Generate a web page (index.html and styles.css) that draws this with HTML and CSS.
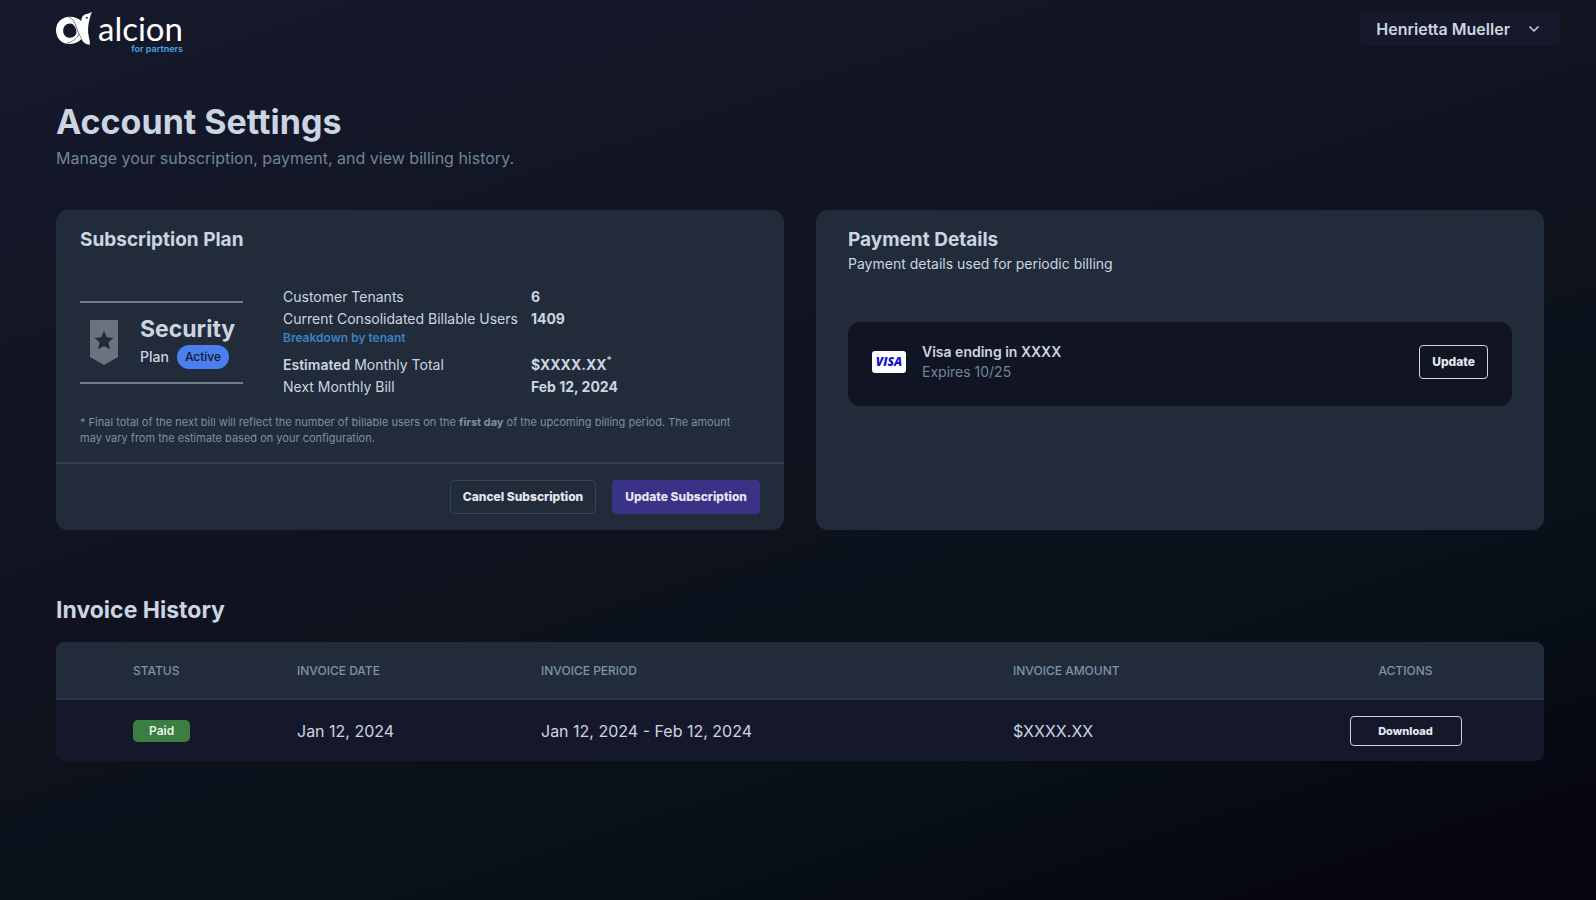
FILE: index.html
```html
<!DOCTYPE html>
<html lang="en">
<head>
<meta charset="utf-8">
<title>Account Settings</title>
<meta name="viewport" content="width=device-width, initial-scale=1">
<link rel="stylesheet" href="styles.css">
</head>
<body>
<header class="topbar">
  <a class="brand" href="#" aria-label="alcion for partners">
    <svg class="brand-mark" viewBox="0 0 36 34" aria-hidden="true">
      <path fill="#fff" fill-rule="evenodd" d="M36 0 31 2c-4 .3-5.500 3.500-5.800 7C22.500 6.500 18.500 4.800 14 4.800 6 4.800 0 10.500 0 18.300S5.500 32 13 32c5 0 9.500-1.800 12.300-5 1.700 3.500 4.500 5.500 8.500 5.800.3-2.300-.3-5-1-8-1.300-5.500-.8-11.500.7-17.300C34 5.500 34.300 3 36 0zM13.800 11.500c3 0 5 2 6.200 5.500.8 2.500.5 4.500-.5 6-1.300 1.800-3.300 2.800-5.700 2.800-3.800 0-6.600-3-6.600-7.100s2.800-7.200 6.600-7.200z"/>
      <path fill="none" stroke="#555a6b" stroke-width=".8" d="M13 5.200c7.500 2.800 7 13.500 12.500 21.500M10.500 31.500c6-1.500 10.500-5 12.300-9.500"/>
      <circle cx="30.800" cy="5.800" r="1" fill="#151829"/>
    </svg>
    <span class="brand-text">
      <span class="brand-name">alcion</span>
      <span class="brand-tag">for partners</span>
    </span>
  </a>
  <button class="user-menu" type="button" aria-haspopup="menu">
    <span>Henrietta Mueller</span>
    <svg class="chevron" viewBox="0 0 12 8" aria-hidden="true"><path d="M1.500 1.500 6 6l4.500-4.500"/></svg>
  </button>
</header>

<main class="page">
  <h1 class="page-title">Account Settings</h1>
  <p class="page-lead">Manage your subscription, payment, and view billing history.</p>

  <div class="cards">
    <section class="card plan-card">
      <div class="plan-body">
        <h2 class="card-title">Subscription Plan</h2>
        <div class="plan-row">
          <div class="plan-box">
            <svg class="plan-icon" viewBox="0 0 28 45" aria-hidden="true">
              <path fill="#6b7280" d="M0 0h28v37l-14 8L0 37z"/>
              <path fill="#222b3a" d="m14 11 2.800 6.300 6.700.7-5 4.600 1.400 6.700L14 25.900l-5.900 3.400 1.400-6.700-5-4.600 6.700-.7z"/>
            </svg>
            <div>
              <div class="plan-name">Security</div>
              <div class="plan-state">Plan <span class="pill">Active</span></div>
            </div>
          </div>
          <dl class="facts">
            <dt>Customer Tenants</dt><dd>6</dd>
            <dt>Current Consolidated Billable Users <a class="breakdown" href="#">Breakdown by tenant</a></dt><dd>1409</dd>
            <dt><b>Estimated</b> Monthly Total</dt><dd>$XXXX.XX<sup>*</sup></dd>
            <dt>Next Monthly Bill</dt><dd>Feb 12, 2024</dd>
          </dl>
        </div>
        <p class="footnote">* Final total of the next bill will reflect the number of billable users on the <b>first day</b> of the upcoming billing period. The amount may vary from the estimate based on your configuration.</p>
      </div>
      <div class="card-actions">
        <button class="btn btn-muted" type="button">Cancel Subscription</button>
        <button class="btn btn-primary" type="button">Update Subscription</button>
      </div>
    </section>

    <section class="card pay-card">
      <h2 class="card-title">Payment Details</h2>
      <p class="card-lead">Payment details used for periodic billing</p>
      <div class="method">
        <span class="visa">VISA</span>
        <div class="method-text">
          <div class="method-name">Visa ending in XXXX</div>
          <div class="method-exp">Expires 10/25</div>
        </div>
        <button class="btn btn-outline" type="button">Update</button>
      </div>
    </section>
  </div>

  <h2 class="section-title">Invoice History</h2>
  <table class="invoices">
    <colgroup><col class="c-gap"><col class="c-status"><col class="c-date"><col class="c-period"><col class="c-amount"><col class="c-actions"></colgroup>
    <thead>
      <tr><th></th><th>STATUS</th><th>INVOICE DATE</th><th>INVOICE PERIOD</th><th>INVOICE AMOUNT</th><th>ACTIONS</th></tr>
    </thead>
    <tbody>
      <tr><td></td><td><span class="paid">Paid</span></td><td>Jan 12, 2024</td><td>Jan 12, 2024 - Feb 12, 2024</td><td>$XXXX.XX</td><td><button class="btn btn-outline btn-download" type="button">Download</button></td></tr>
    </tbody>
  </table>
</main>
</body>
</html>
```
FILE: styles.css
```css
* { box-sizing: border-box; }
body {
  margin: 0;
  min-height: 100vh;
  font-family: Inter, "Liberation Sans", sans-serif;
  font-size: 16px;
  color: #cbd5e1;
  background: linear-gradient(162deg, #15192b 0%, #10131f 45%, #08111a 74%, #060713 92%, #06060f 100%);
}
h1, h2, p, dl, dd { margin: 0; }

.topbar {
  display: flex;
  justify-content: space-between;
  align-items: flex-start;
  padding: 12px 36px 0 56px;
}
.brand { display: flex; gap: 6px; text-decoration: none; color: #fff; }
.brand-mark { width: 36px; height: 34px; }
.brand-text { display: flex; flex-direction: column; align-items: flex-end; }
.brand-name { font: 400 33px/32px Lato, sans-serif; }
.brand-tag { font-size: 9px; line-height: 10px; font-weight: 600; color: #4ba3e3; }
.user-menu {
  display: flex;
  align-items: center;
  gap: 18px;
  height: 34px;
  padding: 0 20px 0 16px;
  border: 0;
  border-radius: 4px;
  background: #15192b;
  color: #cbd5e1;
  font: 600 16px/24px Inter, sans-serif;
}
.chevron { width: 12px; height: 8px; fill: none; stroke: #cbd5e1; stroke-width: 1.5; }

.page { padding: 48px 52px 56px 56px; }
.page-title { font-size: 34px; line-height: 40px; font-weight: 700; }
.page-lead { margin-top: 4px; font-size: 16px; line-height: 24px; color: #708599; }

.cards { display: grid; grid-template-columns: 1fr 1fr; gap: 32px; margin-top: 40px; }
.card { border-radius: 12px; background: #222b3a; }
.card-title { font-size: 19px; line-height: 28px; font-weight: 700; }
.plan-body { padding: 16px 24px; }
.plan-row { display: flex; gap: 40px; margin-top: 33px; }
.plan-box {
  display: flex;
  gap: 22px;
  align-items: center;
  align-self: center;
  width: 163px;
  height: 83px;
  padding-left: 10px;
  border-top: 2px solid #717d8e;
  border-bottom: 2px solid #717d8e;
}
.plan-icon { width: 28px; height: 45px; }
.plan-name { font-size: 23px; line-height: 28px; font-weight: 700; }
.plan-state { display: flex; align-items: center; gap: 8px; margin-top: 2px; font-size: 14px; line-height: 24px; font-weight: 500; }
.pill { padding: 0 8px; border-radius: 12px; background: #4c7fee; color: #111827; font-size: 12px; line-height: 24px; }
.facts { display: grid; grid-template-columns: auto auto; column-gap: 13px; row-gap: 2px; font-size: 14px; line-height: 20px; }
.facts b { font-weight: 600; }
.facts dd { font-weight: 700; }
.facts sup { font-size: 10px; line-height: 0; font-weight: 500; }
.breakdown { display: block; margin: 1px 0 7px; font-size: 12px; line-height: 16px; font-weight: 600; color: #3b82c4; text-decoration: none; }
.footnote { margin-top: 17px; padding-right: 8px; font-size: 11px; line-height: 16px; color: #7a90a4; }
.card-actions { display: flex; justify-content: flex-end; gap: 16px; padding: 16px 24px; border-top: 2px solid #333d4f; }

.btn { height: 34px; padding: 0 12px; border: 1px solid transparent; border-radius: 4px; font: 800 12px/16px Inter, sans-serif; color: #e2e8f0; background: transparent; }
.btn-muted { border-color: #384254; }
.btn-primary { background: #3a3286; }
.btn-outline { border-color: #d4d4d8; }

.pay-card { padding: 16px 32px; }
.card-lead { font-size: 14px; line-height: 20px; }
.method { display: flex; align-items: center; gap: 16px; margin-top: 48px; padding: 20px 24px 24px; border-radius: 12px; background: #111422; }
.visa { width: 34px; border-radius: 3px; background: #fff; color: #1414cc; font: italic 800 12px/22px "Open Sans", sans-serif; text-align: center; }
.method-text { flex: 1; line-height: 20px; font-size: 14px; }
.method-name { font-weight: 600; }
.method-exp { color: #708599; }

.section-title { margin-top: 64px; font-size: 23px; line-height: 32px; font-weight: 700; }
.invoices { width: 100%; margin-top: 16px; table-layout: fixed; border-collapse: separate; border-spacing: 0; border-radius: 8px; overflow: hidden; }
.c-gap { width: 65px; }
.c-status { width: 164px; }
.c-date { width: 244px; }
.c-period { width: 472px; }
.c-amount { width: 266px; }
.invoices th { height: 58px; padding: 0 12px; background: #222b3a; border-bottom: 2px solid #2e374a; font-size: 12px; font-weight: 500; text-align: left; color: #7d93a8; }
.invoices td { height: 61px; padding: 0 12px; background: #15182b; font-size: 16px; }
.invoices th:nth-child(-n+4) { border-right: 1px solid #1f2836; }
.invoices th:last-child, .invoices td:last-child { text-align: center; }
.paid { display: inline-block; padding: 0 16px; border-radius: 5px; background: #3c7d41; color: #e5f5e8; font-size: 12px; line-height: 22px; font-weight: 600; }
.btn-download { width: 112px; height: 30px; font-size: 11px; }
```
